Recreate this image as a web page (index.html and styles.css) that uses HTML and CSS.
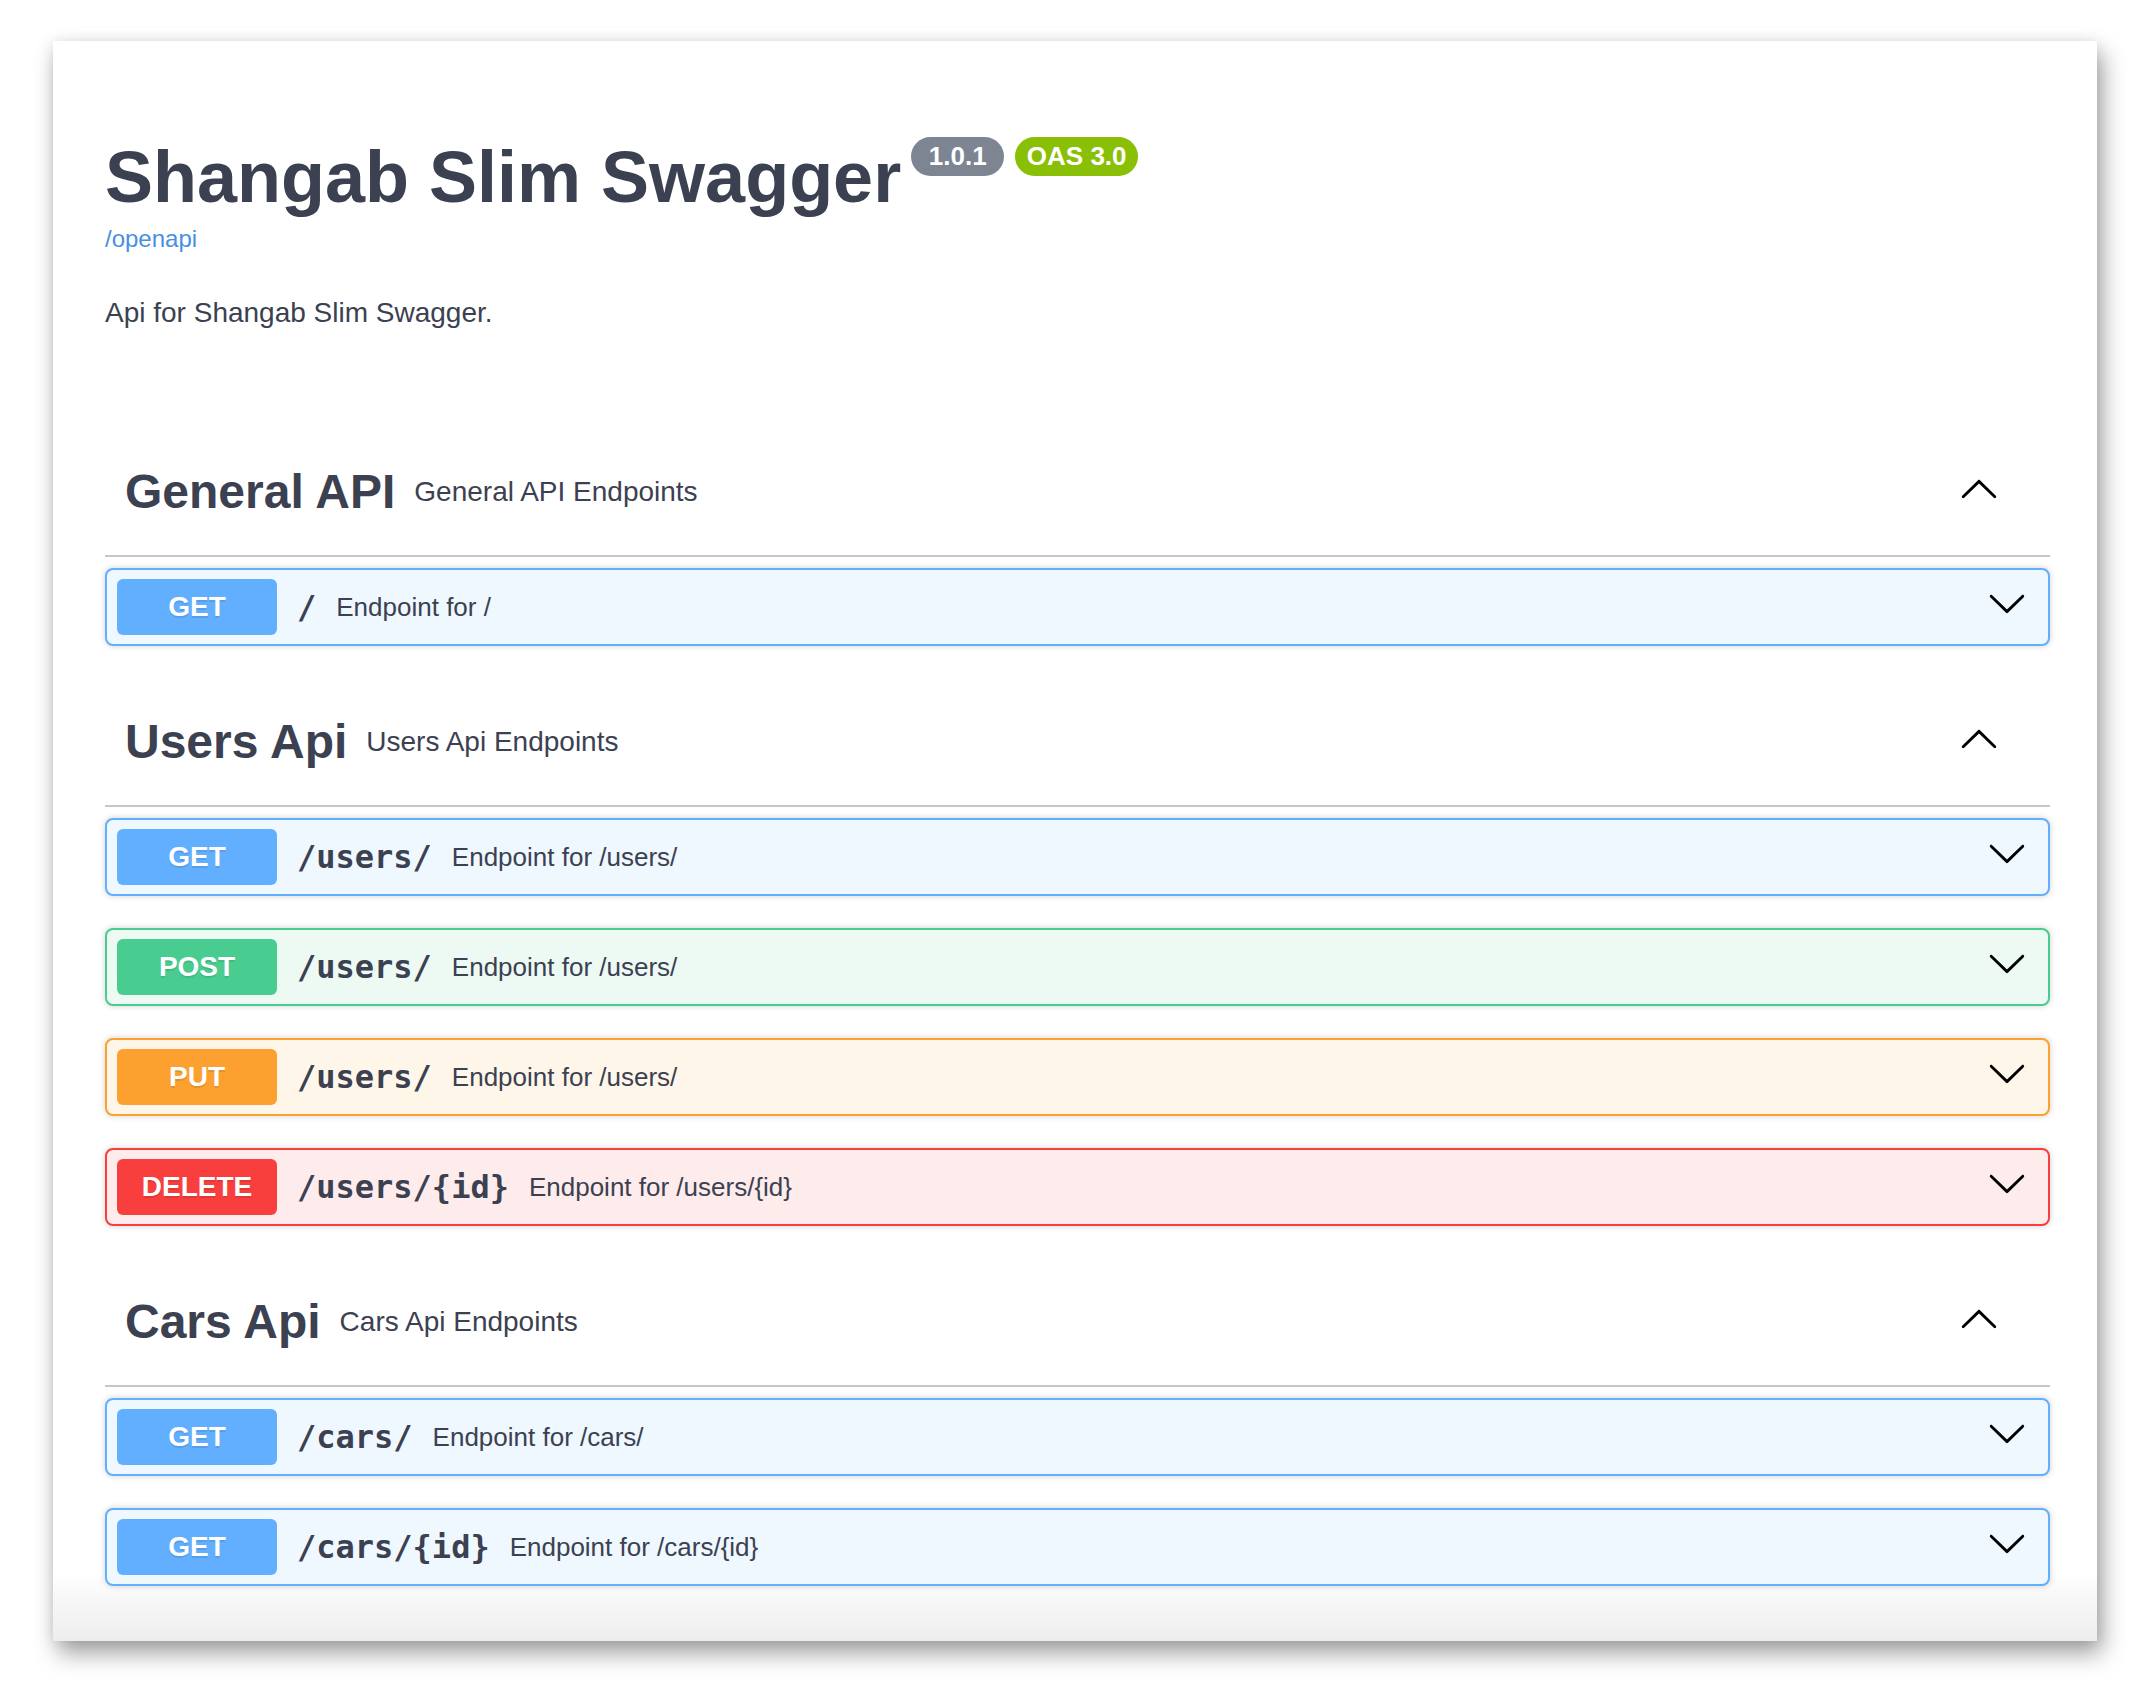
FILE: index.html
```html
<!DOCTYPE html>
<html lang="en">
<head>
<meta charset="utf-8">
<title>Shangab Slim Swagger</title>
<link rel="stylesheet" href="styles.css">
</head>
<body>
<div class="window">
  <div class="info">
    <div class="title-row">
      <h1 class="title">Shangab Slim Swagger</h1>
      <span class="badge ver">1.0.1</span>
      <span class="badge oas">OAS 3.0</span>
    </div>
    <a class="link" href="#">/openapi</a>
    <p class="desc">Api for Shangab Slim Swagger.</p>
  </div>

  <section class="tag">
    <div class="tag-head">
      <h3>General API</h3>
      <small>General API Endpoints</small>
      <svg class="chev up" viewBox="0 0 20 20"><path d="M17.418 6.109c.272-.268.709-.268.979 0s.271.701 0 .969l-7.908 7.83c-.27.268-.707.268-.979 0l-7.908-7.83c-.27-.268-.27-.701 0-.969.271-.268.709-.268.979 0L10 13.25l7.418-7.141z"/></svg>
    </div>
    <div class="ops">
      <div class="op get">
        <span class="method">GET</span>
        <span class="path">/</span>
        <span class="summary">Endpoint for /</span>
        <svg class="chev" viewBox="0 0 20 20"><path d="M17.418 6.109c.272-.268.709-.268.979 0s.271.701 0 .969l-7.908 7.83c-.27.268-.707.268-.979 0l-7.908-7.83c-.27-.268-.27-.701 0-.969.271-.268.709-.268.979 0L10 13.25l7.418-7.141z"/></svg>
      </div>
    </div>
  </section>

  <section class="tag">
    <div class="tag-head">
      <h3>Users Api</h3>
      <small>Users Api Endpoints</small>
      <svg class="chev up" viewBox="0 0 20 20"><path d="M17.418 6.109c.272-.268.709-.268.979 0s.271.701 0 .969l-7.908 7.83c-.27.268-.707.268-.979 0l-7.908-7.83c-.27-.268-.27-.701 0-.969.271-.268.709-.268.979 0L10 13.25l7.418-7.141z"/></svg>
    </div>
    <div class="ops">
      <div class="op get">
        <span class="method">GET</span>
        <span class="path">/users/</span>
        <span class="summary">Endpoint for /users/</span>
        <svg class="chev" viewBox="0 0 20 20"><path d="M17.418 6.109c.272-.268.709-.268.979 0s.271.701 0 .969l-7.908 7.83c-.27.268-.707.268-.979 0l-7.908-7.83c-.27-.268-.27-.701 0-.969.271-.268.709-.268.979 0L10 13.25l7.418-7.141z"/></svg>
      </div>
      <div class="op post">
        <span class="method">POST</span>
        <span class="path">/users/</span>
        <span class="summary">Endpoint for /users/</span>
        <svg class="chev" viewBox="0 0 20 20"><path d="M17.418 6.109c.272-.268.709-.268.979 0s.271.701 0 .969l-7.908 7.83c-.27.268-.707.268-.979 0l-7.908-7.83c-.27-.268-.27-.701 0-.969.271-.268.709-.268.979 0L10 13.25l7.418-7.141z"/></svg>
      </div>
      <div class="op put">
        <span class="method">PUT</span>
        <span class="path">/users/</span>
        <span class="summary">Endpoint for /users/</span>
        <svg class="chev" viewBox="0 0 20 20"><path d="M17.418 6.109c.272-.268.709-.268.979 0s.271.701 0 .969l-7.908 7.83c-.27.268-.707.268-.979 0l-7.908-7.83c-.27-.268-.27-.701 0-.969.271-.268.709-.268.979 0L10 13.25l7.418-7.141z"/></svg>
      </div>
      <div class="op delete">
        <span class="method">DELETE</span>
        <span class="path">/users/{id}</span>
        <span class="summary">Endpoint for /users/{id}</span>
        <svg class="chev" viewBox="0 0 20 20"><path d="M17.418 6.109c.272-.268.709-.268.979 0s.271.701 0 .969l-7.908 7.83c-.27.268-.707.268-.979 0l-7.908-7.83c-.27-.268-.27-.701 0-.969.271-.268.709-.268.979 0L10 13.25l7.418-7.141z"/></svg>
      </div>
    </div>
  </section>

  <section class="tag">
    <div class="tag-head">
      <h3>Cars Api</h3>
      <small>Cars Api Endpoints</small>
      <svg class="chev up" viewBox="0 0 20 20"><path d="M17.418 6.109c.272-.268.709-.268.979 0s.271.701 0 .969l-7.908 7.830c-.27.268-.707.268-.979 0l-7.908-7.83c-.27-.268-.27-.701 0-.969.271-.268.709-.268.979 0L10 13.25l7.418-7.141z"/></svg>
    </div>
    <div class="ops">
      <div class="op get">
        <span class="method">GET</span>
        <span class="path">/cars/</span>
        <span class="summary">Endpoint for /cars/</span>
        <svg class="chev" viewBox="0 0 20 20"><path d="M17.418 6.109c.272-.268.709-.268.979 0s.271.701 0 .969l-7.908 7.83c-.27.268-.707.268-.979 0l-7.908-7.83c-.27-.268-.27-.701 0-.969.271-.268.709-.268.979 0L10 13.25l7.418-7.141z"/></svg>
      </div>
      <div class="op get">
        <span class="method">GET</span>
        <span class="path">/cars/{id}</span>
        <span class="summary">Endpoint for /cars/{id}</span>
        <svg class="chev" viewBox="0 0 20 20"><path d="M17.418 6.109c.272-.268.709-.268.979 0s.271.701 0 .969l-7.908 7.83c-.27.268-.707.268-.979 0l-7.908-7.83c-.27-.268-.27-.701 0-.969.271-.268.709-.268.979 0L10 13.25l7.418-7.141z"/></svg>
      </div>
    </div>
  </section>
</div>
</body>
</html>
```

FILE: styles.css
```css
html, body {
  margin: 0;
  padding: 0;
  background: #ffffff;
}

body {
  font-family: "Liberation Sans", Arial, Helvetica, sans-serif;
  color: #3b4151;
  width: 2150px;
  height: 1683px;
  overflow: hidden;
}

.window {
  margin: 41px 0 0 53px;
  width: 2044px;
  height: 1600px;
  box-sizing: border-box;
  padding: 96px 47px 0 52px;
  background: linear-gradient(to bottom, #ffffff calc(100% - 70px), #ededed 100%);
  box-shadow: 5px 12px 22px rgba(0, 0, 0, 0.38), 0 0 12px rgba(0, 0, 0, 0.08);
}

/* Info block */
.title-row {
  display: flex;
  align-items: flex-start;
}

.title {
  margin: 0;
  font-size: 72px;
  line-height: 80px;
  font-weight: 700;
  color: #3b4151;
}

.badge {
  display: block;
  height: 39px;
  line-height: 39px;
  border-radius: 20px;
  color: #ffffff;
  font-size: 26px;
  font-weight: 700;
  text-align: center;
}

.badge.ver {
  width: 93px;
  margin-left: 10px;
  background: #7d8492;
}

.badge.oas {
  width: 123px;
  margin-left: 11px;
  background: #89bf04;
}

.link {
  display: block;
  margin-top: 8px;
  font-size: 24px;
  line-height: 28px;
  color: #4990e2;
  text-decoration: none;
}

.desc {
  margin: 40px 0 0;
  font-size: 28px;
  line-height: 40px;
}

.info {
  margin-bottom: 95px;
}

/* Tag sections */
.tag-head {
  display: flex;
  align-items: center;
  padding: 36px 40px 35px 20px;
  border-bottom: 2px solid #c5c7cc;
}

.tag-head h3 {
  margin: 0;
  font-size: 48px;
  line-height: 56px;
  font-weight: 700;
}

.tag-head small {
  flex: 1;
  margin-left: 19px;
  font-size: 28px;
  line-height: 40px;
}

.chev {
  width: 40px;
  height: 40px;
  flex: none;
  fill: #000000;
}

.tag-head .chev {
  margin-right: 11px;
  margin-bottom: 5px;
  transform: rotate(180deg);
}

.ops {
  padding-top: 11px;
}

.op {
  display: flex;
  align-items: center;
  padding: 9px 10px;
  margin-bottom: 32px;
  border: 2px solid #61affe;
  border-radius: 8px;
  background: #eff7ff;
  box-shadow: 0 0 6px rgba(0, 0, 0, 0.19);
}

.op .chev {
  margin-right: 11px;
  margin-bottom: 8px;
}

.method {
  flex: none;
  width: 160px;
  height: 56px;
  line-height: 56px;
  border-radius: 6px;
  text-align: center;
  color: #ffffff;
  font-size: 28px;
  font-weight: 700;
  text-shadow: 0 2px 0 rgba(0, 0, 0, 0.1);
  background: #61affe;
}

.path {
  padding: 0 20px;
  font-family: "DejaVu Sans Mono", "Liberation Mono", monospace;
  font-weight: 700;
  font-size: 32px;
  color: #3b4151;
}

.summary {
  flex: 1;
  font-size: 26px;
  color: #3b4151;
}

.op.post {
  border-color: #49cc90;
  background: #edfaf4;
}
.op.post .method {
  background: #49cc90;
}

.op.put {
  border-color: #fca130;
  background: #fff6ea;
}
.op.put .method {
  background: #fca130;
}

.op.delete {
  border-color: #f93e3e;
  background: #feecec;
}
.op.delete .method {
  background: #f93e3e;
}
```
